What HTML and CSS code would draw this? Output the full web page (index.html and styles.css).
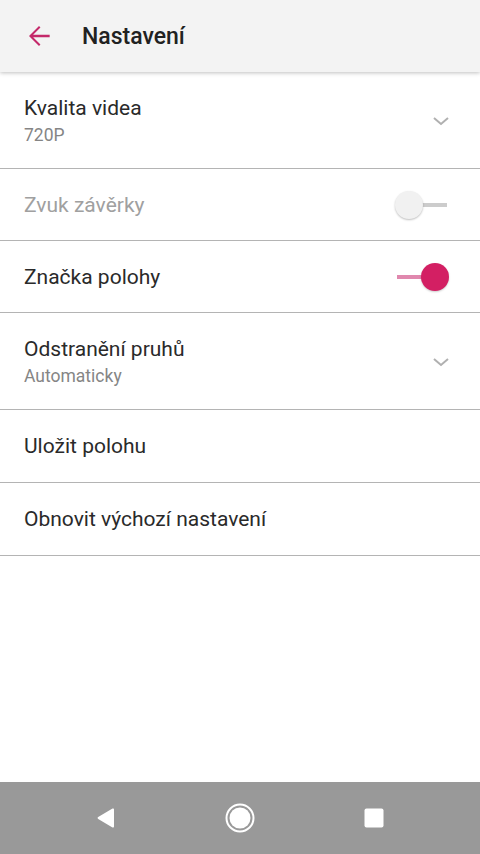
FILE: index.html
```html
<!DOCTYPE html>
<html lang="cs">
<head>
  <meta charset="UTF-8" />
  <meta name="viewport" content="width=device-width, initial-scale=1.0"/>
  <title>Nastavení</title>
  <link rel="stylesheet" href="styles.css">
</head>
<body>

<div class="screen">
  <div class="toolbar">
    <svg class="back" width="32" height="32" viewBox="0 0 24 24">
      <path d="M20 11.1H7.6l5.5-5.5L12 4.5l-7.5 7.5 7.5 7.5 1.1-1.1-5.5-5.5H20z" fill="#c4296a"/>
    </svg>
    <h1>Nastavení</h1>
  </div>

  <div class="list">
    <div class="row tall">
      <div class="text">
        <div class="title">Kvalita videa</div>
        <div class="sub">720P</div>
      </div>
      <svg class="chev" width="18" height="10" viewBox="0 0 18 10">
        <path d="M2 2l7 6 7-6" fill="none" stroke="#b0b0b0" stroke-width="2"/>
      </svg>
    </div>

    <div class="row">
      <div class="title disabled">Zvuk závěrky</div>
      <div class="switch off"><span class="track"></span><span class="thumb"></span></div>
    </div>

    <div class="row">
      <div class="title">Značka polohy</div>
      <div class="switch on"><span class="track"></span><span class="thumb"></span></div>
    </div>

    <div class="row tall">
      <div class="text">
        <div class="title">Odstranění pruhů</div>
        <div class="sub">Automaticky</div>
      </div>
      <svg class="chev" width="18" height="10" viewBox="0 0 18 10">
        <path d="M2 2l7 6 7-6" fill="none" stroke="#b0b0b0" stroke-width="2"/>
      </svg>
    </div>

    <div class="row wide">
      <div class="title">Uložit polohu</div>
    </div>

    <div class="row wide">
      <div class="title">Obnovit výchozí nastavení</div>
    </div>
  </div>

  <div class="navbar">
    <svg width="20" height="22" viewBox="0 0 20 22">
      <path d="M18 2.5v17a1 1 0 0 1-1.5.9L2.2 11.9a1 1 0 0 1 0-1.8L16.5 1.6A1 1 0 0 1 18 2.5z" fill="#fff"/>
    </svg>
    <svg width="30" height="30" viewBox="0 0 30 30">
      <circle cx="15" cy="15" r="13.5" fill="none" stroke="#fff" stroke-width="2"/>
      <circle cx="15" cy="15" r="10.5" fill="#fff"/>
    </svg>
    <svg width="20" height="20" viewBox="0 0 20 20">
      <rect x="0.5" y="0.5" width="19" height="19" rx="2" fill="#fff"/>
    </svg>
  </div>
</div>

</body>
</html>
```

FILE: styles.css
```css
* {
  box-sizing: border-box;
}
body {
  margin: 0;
  font-family: Roboto, "Noto Sans", sans-serif;
  background: #fff;
}
.screen {
  width: 480px;
  height: 854px;
  display: flex;
  flex-direction: column;
  overflow: hidden;
}
.toolbar {
  height: 72px;
  flex-shrink: 0;
  background: #f3f3f3;
  display: flex;
  align-items: center;
  padding-left: 23px;
  box-shadow: 0 1px 4px rgba(0,0,0,0.25);
  position: relative;
  z-index: 1;
}
.toolbar h1 {
  margin: 0 0 0 27px;
  font-size: 23px;
  font-weight: 500;
  color: #212121;
}
.list {
  flex: 1;
}
.row {
  height: 72px;
  border-bottom: 1px solid #b4b4b4;
  display: flex;
  align-items: center;
  justify-content: space-between;
  padding: 0 32px 0 24px;
}
.row.tall {
  height: 97px;
  padding-top: 1px;
}
.row:first-child {
  height: 97px;
}
.row.wide {
  height: 73px;
}
.title {
  font-size: 21px;
  color: #2a2a2a;
}
.title.disabled {
  color: #a0a0a0;
}
.sub {
  font-size: 17.5px;
  color: #858585;
  margin-top: 5px;
}
.chev {
  margin-right: -2px;
}
.switch {
  width: 54px;
  height: 30px;
  position: relative;
  margin-right: -1px;
}
.switch .track {
  position: absolute;
  left: 2px;
  right: 2px;
  top: 13px;
  height: 4px;
}
.switch .thumb {
  position: absolute;
  top: 1px;
  width: 28px;
  height: 28px;
  border-radius: 50%;
}
.switch.off .track {
  background: #cccccc;
}
.switch.off .thumb {
  left: 0;
  background: #f1f1f1;
  box-shadow: 0 1px 2px rgba(0,0,0,0.25);
}
.switch.on .track {
  background: #e088ae;
  right: 16px;
}
.switch.on .thumb {
  right: 0;
  background: #d31f63;
  box-shadow: 0 1px 2px rgba(0,0,0,0.2);
}
.navbar {
  height: 72px;
  flex-shrink: 0;
  background: #999999;
  display: flex;
  align-items: center;
  justify-content: space-between;
  padding: 0 96px 0 96px;
}
```
